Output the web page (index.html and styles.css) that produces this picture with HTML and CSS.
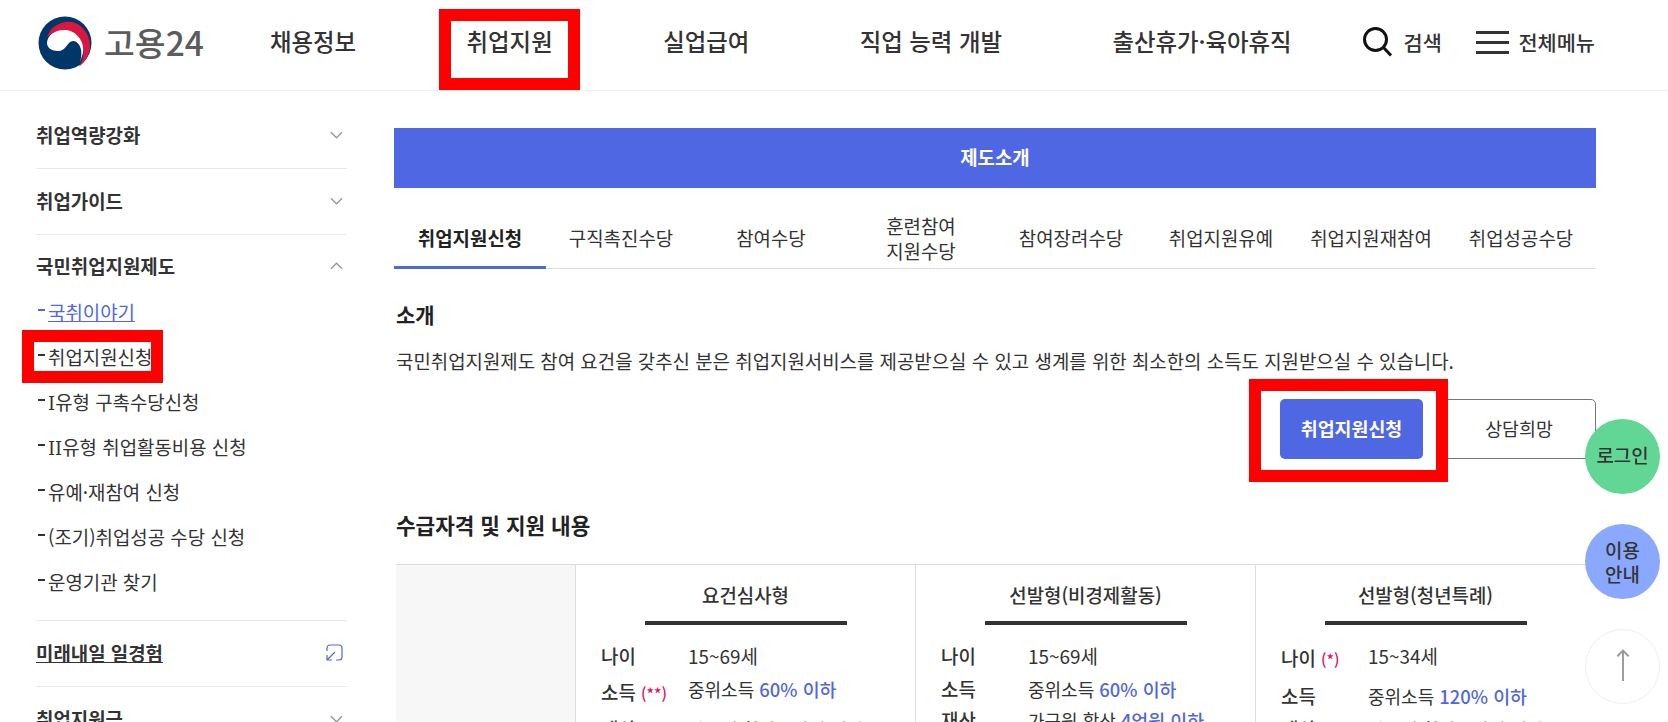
FILE: index.html
```html
<!DOCTYPE html>
<html lang="ko">
<head>
<meta charset="utf-8">
<title>고용24</title>
<link rel="stylesheet" href="styles.css">
</head>
<body>
<header class="header">
  <a class="logo">
    <svg class="logo-mark" viewBox="8 6 54 54" aria-hidden="true">
      <circle cx="35" cy="33" r="26.5" fill="#003668"/>
      <path d="M17 27C21 15 33 11 42 12C52 14 61 25 60 38C59 46 55 52 49 57C55 47 55 36 49 29C42 20 28 17 17 27Z" fill="#d9173f"/>
      <path d="M17 33C17 25 26 19 36 20C46 21 55 31 53 43L50 52C53 42 51 33 44 31C37 30 37 41 28 41C22 41 17 38 17 33Z" fill="#fff"/>
    </svg>
    <span class="logo-text">고용24</span>
  </a>
  <nav class="nav">
    <a>채용정보</a>
    <a>취업지원</a>
    <a>실업급여</a>
    <a>직업 능력 개발</a>
    <a>출산휴가·육아휴직</a>
  </nav>
  <div class="tools">
    <a class="tool tool-search">
      <svg class="icon-search" viewBox="0 0 30 30" aria-hidden="true"><circle cx="12.5" cy="12.5" r="11" fill="none" stroke="#111" stroke-width="3"/><path d="M20.5 20.5L28 28.5" stroke="#111" stroke-width="3" fill="none"/></svg>
      <span>검색</span>
    </a>
    <a class="tool tool-menu">
      <span class="burger"><i></i><i></i><i></i></span>
      <span>전체메뉴</span>
    </a>
  </div>
</header>

<div class="layout">
  <aside class="side">
    <div class="side-item"><span>취업역량강화</span><svg class="chev" viewBox="0 0 14 8"><path d="M1 1l6 6 6-6"/></svg></div>
    <div class="side-item"><span>취업가이드</span><svg class="chev" viewBox="0 0 14 8"><path d="M1 1l6 6 6-6"/></svg></div>
    <div class="side-group">
      <div class="side-item side-open"><span>국민취업지원제도</span><svg class="chev" viewBox="0 0 14 8"><path d="M1 7l6-6 6 6"/></svg></div>
      <ul class="sub">
        <li class="current"><a>국취이야기</a></li>
        <li><a>취업지원신청</a></li>
        <li><a><span class="roman">I</span>유형 구촉수당신청</a></li>
        <li><a><span class="roman">II</span>유형 취업활동비용 신청</a></li>
        <li><a>유예·재참여 신청</a></li>
        <li><a>(조기)취업성공 수당 신청</a></li>
        <li><a>운영기관 찾기</a></li>
      </ul>
    </div>
    <div class="side-item"><span class="ul">미래내일 일경험</span>
      <svg class="ext" viewBox="0 0 17 17"><path d="M1 7V4a3 3 0 0 1 3-3h9a3 3 0 0 1 3 3v9a3 3 0 0 1-3 3h-3M1 11v5h5M1.5 15.5L9 8"/></svg>
    </div>
    <div class="side-item"><span>취업지원금</span><svg class="chev" viewBox="0 0 14 8"><path d="M1 1l6 6 6-6"/></svg></div>
  </aside>

  <main class="main">
    <div class="banner">제도소개</div>
    <div class="tabs">
      <a class="tab active">취업지원신청</a>
      <a class="tab">구직촉진수당</a>
      <a class="tab">참여수당</a>
      <a class="tab">훈련참여<br>지원수당</a>
      <a class="tab">참여장려수당</a>
      <a class="tab">취업지원유예</a>
      <a class="tab">취업지원재참여</a>
      <a class="tab">취업성공수당</a>
    </div>
    <h2 class="h-intro">소개</h2>
    <p class="desc">국민취업지원제도 참여 요건을 갖추신 분은 취업지원서비스를 제공받으실 수 있고 생계를 위한 최소한의 소득도 지원받으실 수 있습니다.</p>
    <div class="actions">
      <a class="btn btn-primary">취업지원신청</a>
      <a class="btn btn-line">상담희망</a>
    </div>
    <h2 class="h-table">수급자격 및 지원 내용</h2>
    <div class="table">
      <div class="cell cell-empty"></div>
      <div class="cell">
        <h3 class="col-title">요건심사형</h3>
        <div class="row"><b>나이</b><span class="age">15~69세</span></div>
        <div class="row row-mark"><b>소득 <em>(**)</em></b><span>중위소득 <strong>60% 이하</strong></span></div>
        <div class="row"><b>재산</b><span>가구원 합산 <strong>4억원 이하</strong></span></div>
      </div>
      <div class="cell">
        <h3 class="col-title">선발형(비경제활동)</h3>
        <div class="row"><b>나이</b><span class="age">15~69세</span></div>
        <div class="row row-tight"><b>소득</b><span>중위소득 <strong>60% 이하</strong></span></div>
        <div class="row"><b>재산</b><span>가구원 합산 <strong>4억원 이하</strong></span></div>
      </div>
      <div class="cell">
        <h3 class="col-title">선발형(청년특례)</h3>
        <div class="row row-first"><b>나이 <em>(*)</em></b><span class="age">15~34세</span></div>
        <div class="row"><b>소득</b><span>중위소득 <strong>120% 이하</strong></span></div>
        <div class="row"><b>재산</b><span>가구원 합산 <strong>4억원 이하</strong></span></div>
      </div>
    </div>
  </main>
</div>

<div class="mark mark-nav"></div>
<div class="mark mark-side"></div>
<div class="mark mark-btn"></div>

<a class="fab fab-login">로그인</a>
<a class="fab fab-guide">이용<br>안내</a>
<a class="fab fab-top">
  <svg viewBox="0 0 18 40" aria-hidden="true"><path d="M9 40V2M2 9L9 2L16 9" fill="none" stroke="#999" stroke-width="2.4"/></svg>
</a>
</body>
</html>
```

FILE: styles.css
```css
* { box-sizing: border-box; }
html, body { margin: 0; height: 722px; overflow: hidden; background: #fff; }
body {
  font-family: "Noto Sans CJK KR", "Noto Sans", sans-serif;
  font-size: 18.9px;
  color: #333;
  position: relative;
}
a { color: inherit; text-decoration: none; }
h2, h3, p, ul { margin: 0; padding: 0; }
ul { list-style: none; }

/* header */
.header {
  height: 91px;
  border-bottom: 1px solid #eee;
  display: flex;
  align-items: center;
  padding-left: 38px;
}
.logo { display: flex; align-items: center; width: 232px; margin-top: -4px; }
.logo-mark { width: 54px; height: 54px; flex: none; }
.logo-text { margin-left: 12px; margin-top: -2px; font-size: 33.5px; color: #5c5c5c; font-weight: 500; line-height: 1; }
.nav { display: flex; gap: 110.5px; font-size: 23.4px; font-weight: 500; margin-top: -9px; }
.tools { display: flex; margin-left: 71px; margin-top: -6px; align-items: center; font-size: 20.8px; font-weight: 500; }
.tool { display: flex; align-items: center; }
.tool-search { gap: 11px; }
.tool-menu { margin-left: 34px; gap: 9.5px; }
.icon-search { width: 30px; height: 30px; }
.burger { display: flex; flex-direction: column; gap: 7px; width: 33px; }
.burger i { display: block; height: 3px; background: #333; }

/* layout */
.layout { display: flex; padding-left: 36px; }
.side { width: 311px; flex: none; padding-top: 12px; }
.side-item {
  height: 66px;
  border-bottom: 1px solid #e9e9e9;
  display: flex;
  align-items: center;
  justify-content: space-between;
  font-weight: 700;
  padding-right: 4px;
  color: #333;
}
.side-item > span { margin-top: -2px; }
.side-open { border-bottom: 0; height: 55px; padding-top: 8px; }
.side-group { border-bottom: 1px solid #e9e9e9; padding-bottom: 15px; }
.chev { width: 13px; height: 8px; fill: none; stroke: #999; stroke-width: 1.5; margin-top: -2px; }
.ul { text-decoration: underline; }
.ext { width: 17px; height: 17px; fill: none; stroke: #4f67e3; stroke-width: 1.2; margin-top: -2px; }
.sub li { height: 45px; display: flex; align-items: center; padding-left: 2px; }
.sub li::before { content: ""; width: 7px; height: 2px; flex: none; margin: -6px 3px 0 0; background: #333; }
.sub li a { margin-top: -2px; }
.roman { font-family: "DejaVu Serif", serif; font-size: 18px; }
.sub .current::before { background: #4f67e3; }
.sub .current a { color: #4f67e3; text-decoration: underline; }

/* main */
.main { width: 1202px; margin-left: 47px; padding-top: 37px; }
.banner {
  height: 60px;
  background: #4f67e3;
  color: #fff;
  font-weight: 700;
  display: flex;
  align-items: center;
  justify-content: center;
  padding-bottom: 3px;
}
.tabs { display: flex; height: 81px; border-bottom: 1px solid #ddd; }
.tab {
  flex: 1 1 0;
  display: flex;
  align-items: center;
  justify-content: center;
  text-align: center;
  line-height: 25px;
  height: 81px;
  padding-top: 18px;
}
.active { flex: none; width: 152px; font-weight: 700; color: #222; border-bottom: 3px solid #4f67e3; padding-top: 21px; }
.h-intro { font-size: 21px; font-weight: 700; line-height: 28px; margin-top: 31px; margin-left: 2px; color: #222; }
.desc { margin: 19px 0 0 2px; line-height: 28px; white-space: nowrap; }
.actions { display: flex; justify-content: flex-end; gap: 19px; margin-top: 24px; }
.btn {
  height: 60px;
  display: flex;
  align-items: center;
  justify-content: center;
  border-radius: 5px;
  padding-bottom: 2px;
}
.btn-primary { width: 143px; background: #4f67e3; color: #fff; font-weight: 700; font-size: 18.4px; }
.btn-line { width: 154px; border: 1px solid #777; font-size: 18.4px; }
.h-table { font-size: 21.3px; font-weight: 700; line-height: 28px; margin: 52px 0 0 2px; color: #222; }
.table {
  display: grid;
  grid-template-columns: 179px 340px 340px 341px;
  margin: 25px 0 0 2px;
  border-top: 1px solid #ddd;
  height: 300px;
}
.cell { border-left: 1px solid #ddd; padding: 14px 0 0 25px; }
.cell-empty { background: #f7f7f7; border-left: 0; }
.col-title {
  font-size: 18.9px;
  font-weight: 500;
  text-align: center;
  width: 202px;
  margin-left: 43.5px;
  line-height: 32px;
  padding-bottom: 10px;
  border-bottom: 4px solid #333;
  box-sizing: content-box;
  margin-bottom: 18px;
}
.row { display: flex; line-height: 26px; margin-bottom: 7px; font-size: 18px; }
.row b { width: 87px; flex: none; font-weight: 500; font-size: 18.9px; }
.row em { color: #e0115f; font-style: normal; font-size: 15.5px; }
.row strong { color: #4f67e3; font-weight: 500; font-size: 18.4px; }
.age { font-size: 18.9px; }
.row-mark { margin-bottom: 10px; }
.row-mark b { padding-top: 3px; }
.row-tight { margin-bottom: 5px; }
.row-first b { padding-top: 2px; }
.row-first { margin-bottom: 11px; }

/* annotations */
.mark { position: absolute; border: 12px solid #f00; pointer-events: none; }
.mark-nav { left: 439px; top: 9px; width: 141px; height: 81px; }
.mark-side { left: 22px; top: 330px; width: 141px; height: 53px; }
.mark-btn { left: 1249px; top: 379px; width: 199px; height: 103px; }

/* floating buttons */
.fab {
  position: fixed;
  left: 1585px;
  width: 75px;
  height: 75px;
  border-radius: 50%;
  display: flex;
  align-items: center;
  justify-content: center;
  text-align: center;
  font-weight: 500;
  line-height: 24px;
  color: #333;
}
.fab-login { top: 419px; background: #62d695; padding-bottom: 4px; }
.fab-guide { top: 524px; background: #8ba8ff; }
.fab-top { top: 629px; background: #fff; border: 1px solid #eee; }
.fab-top svg { width: 18px; height: 32px; margin-top: -4px; }
```
